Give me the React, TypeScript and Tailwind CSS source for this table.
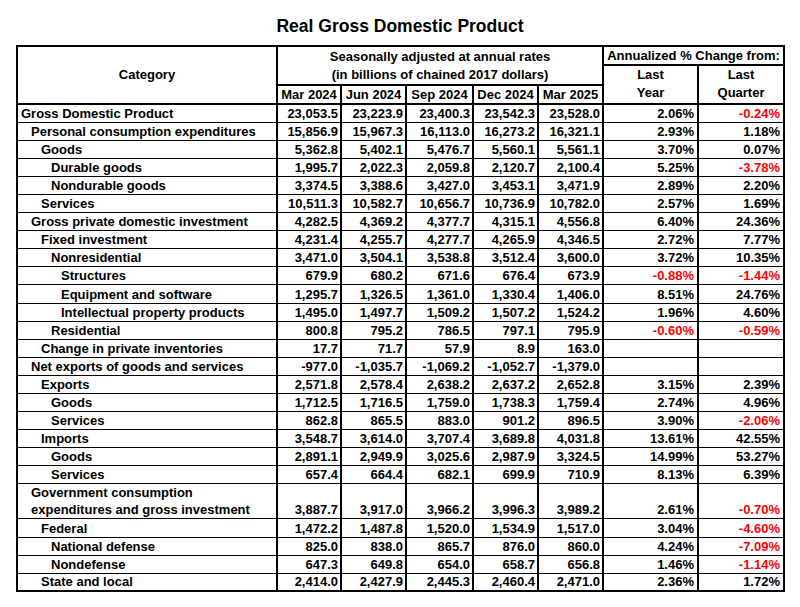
import React from 'react'

type Row = [string, number, string, string, string, string, string, string, string]

const rows: Row[] = [
  ['Gross Domestic Product', 0, '23,053.5', '23,223.9', '23,400.3', '23,542.3', '23,528.0', '2.06%', '-0.24%'],
  ['Personal consumption expenditures', 1, '15,856.9', '15,967.3', '16,113.0', '16,273.2', '16,321.1', '2.93%', '1.18%'],
  ['Goods', 2, '5,362.8', '5,402.1', '5,476.7', '5,560.1', '5,561.1', '3.70%', '0.07%'],
  ['Durable goods', 3, '1,995.7', '2,022.3', '2,059.8', '2,120.7', '2,100.4', '5.25%', '-3.78%'],
  ['Nondurable goods', 3, '3,374.5', '3,388.6', '3,427.0', '3,453.1', '3,471.9', '2.89%', '2.20%'],
  ['Services', 2, '10,511.3', '10,582.7', '10,656.7', '10,736.9', '10,782.0', '2.57%', '1.69%'],
  ['Gross private domestic investment', 1, '4,282.5', '4,369.2', '4,377.7', '4,315.1', '4,556.8', '6.40%', '24.36%'],
  ['Fixed investment', 2, '4,231.4', '4,255.7', '4,277.7', '4,265.9', '4,346.5', '2.72%', '7.77%'],
  ['Nonresidential', 3, '3,471.0', '3,504.1', '3,538.8', '3,512.4', '3,600.0', '3.72%', '10.35%'],
  ['Structures', 4, '679.9', '680.2', '671.6', '676.4', '673.9', '-0.88%', '-1.44%'],
  ['Equipment and software', 4, '1,295.7', '1,326.5', '1,361.0', '1,330.4', '1,406.0', '8.51%', '24.76%'],
  ['Intellectual property products', 4, '1,495.0', '1,497.7', '1,509.2', '1,507.2', '1,524.2', '1.96%', '4.60%'],
  ['Residential', 3, '800.8', '795.2', '786.5', '797.1', '795.9', '-0.60%', '-0.59%'],
  ['Change in private inventories', 2, '17.7', '71.7', '57.9', '8.9', '163.0', '', ''],
  ['Net exports of goods and services', 1, '-977.0', '-1,035.7', '-1,069.2', '-1,052.7', '-1,379.0', '', ''],
  ['Exports', 2, '2,571.8', '2,578.4', '2,638.2', '2,637.2', '2,652.8', '3.15%', '2.39%'],
  ['Goods', 3, '1,712.5', '1,716.5', '1,759.0', '1,738.3', '1,759.4', '2.74%', '4.96%'],
  ['Services', 3, '862.8', '865.5', '883.0', '901.2', '896.5', '3.90%', '-2.06%'],
  ['Imports', 2, '3,548.7', '3,614.0', '3,707.4', '3,689.8', '4,031.8', '13.61%', '42.55%'],
  ['Goods', 3, '2,891.1', '2,949.9', '3,025.6', '2,987.9', '3,324.5', '14.99%', '53.27%'],
  ['Services', 3, '657.4', '664.4', '682.1', '699.9', '710.9', '8.13%', '6.39%'],
  ['Government consumption|expenditures and gross investment', 1, '3,887.7', '3,917.0', '3,966.2', '3,996.3', '3,989.2', '2.61%', '-0.70%'],
  ['Federal', 2, '1,472.2', '1,487.8', '1,520.0', '1,534.9', '1,517.0', '3.04%', '-4.60%'],
  ['National defense', 3, '825.0', '838.0', '865.7', '876.0', '860.0', '4.24%', '-7.09%'],
  ['Nondefense', 3, '647.3', '649.8', '654.0', '658.7', '656.8', '1.46%', '-1.14%'],
  ['State and local', 2, '2,414.0', '2,427.9', '2,445.3', '2,460.4', '2,471.0', '2.36%', '1.72%'],
]

const indent = ['pl-[3px]', 'pl-[13px]', 'pl-[23px]', 'pl-[33px]', 'pl-[43px]']
const dates = ['Mar 2024', 'Jun 2024', 'Sep 2024', 'Dec 2024', 'Mar 2025']

const pct = (v: string) => (v.startsWith('-') ? 'text-[#ff0000]' : 'text-black')

export default function App() {
  return (
    <div
      className="min-h-[607px] w-[800px] bg-white pt-[16px] font-bold text-black"
      style={{ fontFamily: '"Liberation Sans", Arial, sans-serif' }}
    >
      <h1 className="h-[20px] text-center text-[17.5px] leading-[20px]">Real Gross Domestic Product</h1>

      <table className="ml-[16px] mt-[9px] w-[767px] table-fixed border-collapse border-2 border-black text-[13px] leading-[15px]">
        <colgroup>
          <col className="w-[260px]" />
          <col className="w-[64px]" />
          <col className="w-[65px]" />
          <col className="w-[67px]" />
          <col className="w-[65px]" />
          <col className="w-[65px]" />
          <col className="w-[95px]" />
          <col className="w-[86px]" />
        </colgroup>
        <thead>
          <tr className="h-[19px]">
            <th rowSpan={3} className="border-2 border-black pb-[1px] text-center align-middle font-bold">
              Category
            </th>
            <th colSpan={5} className="border-x-2 border-black pt-[1px] text-center align-middle font-bold">
              Seasonally adjusted at annual rates
            </th>
            <th colSpan={2} className="border-2 border-black text-center align-middle font-bold">
              Annualized % Change from:
            </th>
          </tr>
          <tr className="h-[18px]">
            <th colSpan={5} className="border-x-2 border-black text-center align-middle font-bold">
              (in billions of chained 2017 dollars)
            </th>
            <th rowSpan={2} className="border-2 border-black pb-[1px] text-center align-middle font-bold leading-[18px]">
              Last
              <br />
              Year
            </th>
            <th rowSpan={2} className="border-2 border-black pb-[1px] text-center align-middle font-bold leading-[18px]">
              Last
              <br />
              Quarter
            </th>
          </tr>
          <tr className="h-[18px]">
            {dates.map((d) => (
              <th key={d} className="border-2 border-black text-center align-middle font-bold">
                {d}
              </th>
            ))}
          </tr>
        </thead>
        <tbody>
          {rows.map((r, i) => {
            const [label, lvl, ...vals] = r
            const two = label.includes('|')
            return (
              <tr key={i} className={two ? 'h-[35px]' : 'h-[18.1px]'}>
                <td className={`border-x-2 border-t border-black align-bottom ${indent[lvl]} ${two ? 'pb-0' : 'pb-[1px]'}`}>
                  {two ? (
                    <>
                      <div className="leading-[18px]">{label.split('|')[0]}</div>
                      <div className="leading-[16px]">{label.split('|')[1]}</div>
                    </>
                  ) : (
                    label
                  )}
                </td>
                {vals.slice(0, 5).map((v, j) => (
                  <td key={j} className="border-x-2 border-t border-black pb-[1px] pr-[2px] text-right align-bottom">
                    {v}
                  </td>
                ))}
                {vals.slice(5).map((v, j) => (
                  <td
                    key={'p' + j}
                    className={`border-x-2 border-t border-black pb-[1px] pr-[3px] text-right align-bottom ${pct(v)}`}
                  >
                    {v}
                  </td>
                ))}
              </tr>
            )
          })}
        </tbody>
      </table>
    </div>
  )
}
